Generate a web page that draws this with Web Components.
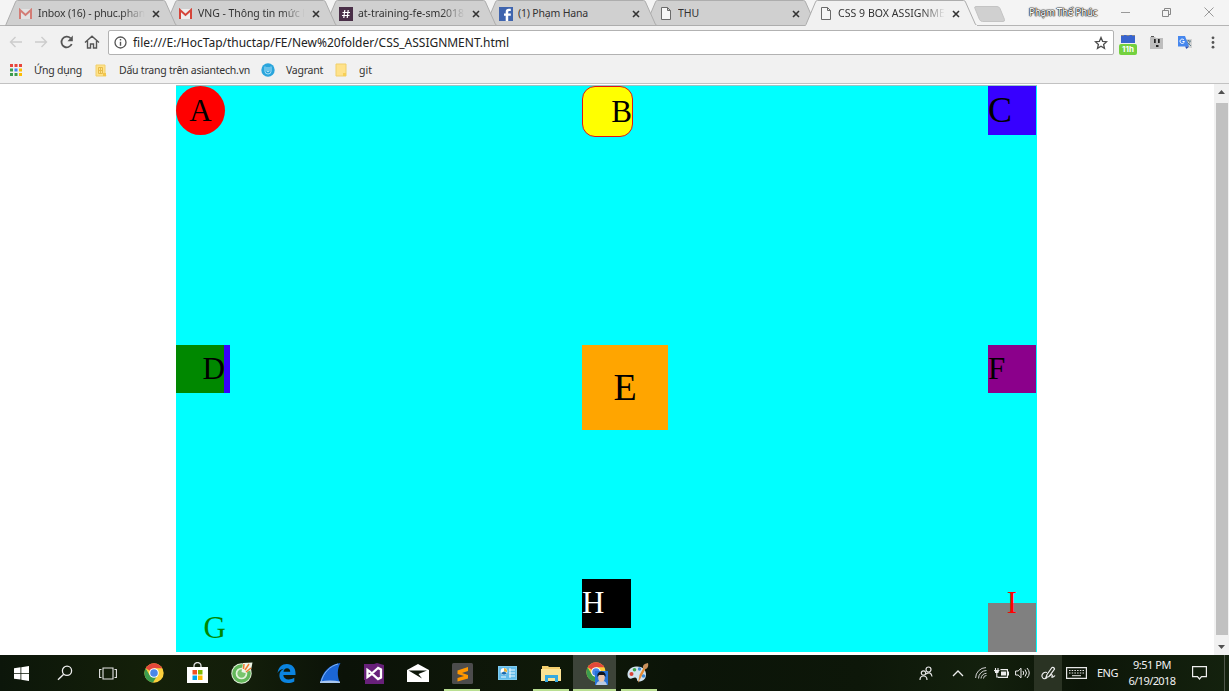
<!DOCTYPE html>
<html lang="vi"><head><meta charset="utf-8"><title>CSS 9 BOX ASSIGNMENT</title>
<style>html,body{margin:0;height:100%;overflow:hidden}</style></head>
<body><desktop-screen></desktop-screen>
<script>
const define=(name,html,init)=>customElements.define(name,class extends HTMLElement{
  connectedCallback(){
    if(this.shadowRoot)return;
    const t=document.createElement('template');
    t.innerHTML=typeof html==='function'?html(this):html;
    this.attachShadow({mode:'open'}).append(t.content.cloneNode(true));
    if(init)init(this);
  }
});

/* A single line of text, tracked to a given width. */
define('fit-text',`<style>:host{display:block;white-space:pre;flex:none}span{display:inline-block}</style><span><slot></slot></span>`,el=>{
  const s=el.shadowRoot.querySelector('span'),w=+el.getAttribute('w');
  const n=[...el.textContent.trim()].length;
  el.style.width=w+'px';
  s.style.letterSpacing=((w-s.getBoundingClientRect().width)/n).toFixed(3)+'px';
});

const page='<path d="M1.5.5h6l3 3v9h-9z M7.5.5v3h3" fill="#f6f6f6" stroke="#6b6b6b"/>';
const gmail='<path d="M0 1h13v10H0z" fill="#eee"/><path d="M1 11V2l5.500 5L12 2v9" fill="none" stroke="#d5453a" stroke-width="2"/>';
const folder='<path d="M1 1h10v12H1z" fill="#ffe28a" stroke="#f0cf6a"/><path d="M8 10h3v3H8z" fill="#f7cf55"/>';
const chrome='<circle cx="10" cy="10" r="9.700" fill="#fbcf3c"/><path d="M10 10L1.600 5.200A9.700 9.700 0 0 1 18.400 5.200H10z" fill="#e2483b"/><path d="M1.600 5.200A9.700 9.700 0 0 0 9 19.600L13.500 12 10 10 5.800 12.400z" fill="#3c9c4e"/><circle cx="10" cy="10" r="4.800" fill="#fff"/><circle cx="10" cy="10" r="3.800" fill="#4a86e8"/>';
const icons={
 gmail:[13,12,gmail],gmaildim:[13,12,'<g opacity=".6">'+gmail+'</g>'],page:[12,13,page],folder:[12,14,folder],
 slack:[14,14,'<rect width="14" height="14" fill="#4a2f48"/><path d="M5.800 3L4.800 11M9.200 3L8.200 11M3.500 5.500h7.500M3 8.500h7.500" stroke="#fff" stroke-width="1.200"/>'],
 fb:[14,14,'<rect width="14" height="14" fill="#3f64ae"/><path d="M9.200 14V8.800h2.600V6.600H9.200V5.200c0-.9.400-1.300 1.300-1.300h1.300V1.800h-2C7.700 1.800 6.700 3 6.700 5v1.600H5v2.200h1.700V14z" fill="#fff"/>'],
 close:[8,8,'<path d="M1 1l6 6M7 1l-6 6" stroke="#333" stroke-width="1.600"/>'],
 back:[14,12,'<path d="M13 6H1.500M6.500 1l-5 5 5 5" fill="none" stroke="#ccc" stroke-width="1.400"/>'],
 fwd:[14,12,'<path d="M0 6h11.500M6.500 1l5 5-5 5" fill="none" stroke="#ccc" stroke-width="1.400"/>'],
 reload:[14,14,'<path d="M11.700 9A5.300 5.300 0 1 1 10.500 3.200" fill="none" stroke="#555" stroke-width="1.800"/><path d="M12.800.5v5.700H7.500z" fill="#555"/>'],
 home:[16,14,'<path d="M1 7.500L8 1.200l7 6.300M3.500 6v7h3V9h3v4h3V6" fill="none" stroke="#555" stroke-width="1.400"/>'],
 info:[13,13,'<circle cx="6.500" cy="6.500" r="5.500" fill="none" stroke="#555" stroke-width="1.300"/><path d="M6.500 5.800v4M6.500 3v1.400" stroke="#555" stroke-width="1.400"/>'],
 star:[14,14,'<path d="M7 1.500l1.600 3.800 4 .4-3 2.700.9 4L7 10.300l-3.500 2.100.9-4-3-2.700 4-.4z" fill="none" stroke="#4d4d4d" stroke-width="1.300"/>'],
 ext2:[13,13,'<path d="M0 1h5l1 1h7v11H0z" fill="#bdbdbd"/><path d="M1 0h3v1H1z" fill="#555"/><path d="M4 3h1.700v4H4zM8 3h1.700v4H8zM6 9h2.500v2H6z" fill="#222"/>'],
 trans:[15,15,'<path d="M6 4h8v9H9z" fill="#d4d4d4"/><path d="M8 6h5M10.500 5v1M12 6c0 2-2 4-4 5M9 7l4 4" stroke="#607d8b" fill="none"/><path d="M0 1h7l4 10.500H0z" fill="#4687ee"/><path d="M7 11.500h4L8.500 14z" fill="#2b50b5"/><path d="M6 5A2.200 2.200 0 1 0 6.400 6.500H4.500" fill="none" stroke="#fff"/>'],
 dots:[4,13,'<g fill="#555"><circle cx="2" cy="1.800" r="1.400"/><circle cx="2" cy="6.500" r="1.400"/><circle cx="2" cy="11.200" r="1.400"/></g>'],
 apps:[12,12,[0,1,2].map(r=>[0,1,2].map(c=>`<rect x="${c*4.500}" y="${r*4.500}" width="3" height="3" fill="${[['#e8453c','#e8453c','#e8453c'],['#3c9c4e','#4285f4','#fbbc05'],['#3c9c4e','#3c9c4e','#fbbc05']][r][c]}"/>`).join('')).join('')],
 book:[12,13,'<path d="M1 1h9v9l1 2H1z" fill="#ffe28a" stroke="#f0cf6a"/><path d="M3.500 3.500h4v6h-4zM3.500 6.500h4M5.500 4v5" fill="none" stroke="#e6bb4a"/><path d="M8 9h3v3H8z" fill="#f2c64c"/>'],
 vag:[14,14,'<circle cx="7" cy="7" r="6.700" fill="#2aa5dc"/><path d="M4 3.500v5q0 2.500 3 2.500t3-2.500v-5M6 4v4.500h2V4" fill="none" stroke="#a7e0f8" stroke-width="1"/>'],
 win:[15,15,'<path d="M0 2.200L6.500 1.300V7H0zM7.300 1.200L15 0v7H7.300zM0 7.800h6.500v5.700L0 12.700zM7.300 7.800H15V15l-7.700-1.200z" fill="#fff"/>'],
 search:[16,16,'<circle cx="10" cy="5.800" r="4.600" fill="none" stroke="#eee" stroke-width="1.300"/><path d="M6.700 9.200L1 14.800" stroke="#eee" stroke-width="1.400"/>'],
 task:[18,13,'<path d="M4 1h10v11H4zM2.500 2.500H.6v8h1.900M15.500 2.500h1.900v8h-1.900" fill="none" stroke="#e4e4e4" stroke-width="1.100"/>'],
 chrome:[20,20,chrome],
 store:[21,22,'<path d="M7 6V4a3.500 3.500 0 0 1 7 0v2" fill="none" stroke="#ddd" stroke-width="1.300"/><path d="M0 5h21v16H0z" fill="#fff"/><path d="M5.500 8h4.500v4.500H5.500z" fill="#f25022"/><path d="M11 8h4.500v4.500H11z" fill="#7fba00"/><path d="M5.500 13.500h4.500V18H5.500z" fill="#00a4ef"/><path d="M11 13.500h4.500V18H11z" fill="#ffb900"/>'],
 coc:[22,22,'<circle cx="10.500" cy="11.500" r="10.200" fill="#e4f3dd"/><circle cx="10.500" cy="11.500" r="9.300" fill="#63b75a"/><circle cx="10.500" cy="11.500" r="5" fill="#79c56d" stroke="#e4f3dd" stroke-width="1.700"/><path d="M10.500 10L12 1 21.500.5 20 8l-6 3z" fill="#eef7e8"/><path d="M12.500 7l.5-5M14 8l4-6M15 10l5-4" stroke="#ef7b32" stroke-width="1.500"/>'],
 edge:[19,19,'<path d="M.5 9C1.500 3 5 0 9.800 0 15.500 0 18.500 4 18.500 9v2H6.300c.2 3 2.400 4.400 5.400 4.400 2 0 3.800-.6 5.600-1.700v3.800c-2 1-4 1.500-6.600 1.500C5.500 19 2.400 16 2.400 11.500 2.400 8.400 4 6 6.800 4.700 4 5 2 6.500.5 9zM6.500 7.700h6.700c0-2-1-3.400-3.200-3.400-2 0-3.200 1.400-3.500 3.400z" fill="#0b84e0"/>'],
 shark:[21,20,'<path d="M0 20C2 9 10 1 20.500 0 17 6 17 13 20 20z" fill="#1b66d6"/><path d="M1 19.500C3 10 10 3 18 1" fill="none" stroke="#83b4f2"/><path d="M0 18.500q10-2 20 0V20H0z" fill="#a9c8ef"/>'],
 vs:[20,21,'<path d="M0 1h10L13 0l7 2v19H1V17H0z" fill="#68217a"/><path d="M14 5L5.500 12.500 3.500 14V7l2 1.500L14 16l3-1.500v-8z" fill="none" stroke="#fff" stroke-width="2.300"/>'],
 mail:[22,18,'<path d="M0 6L11 0l11 6v12H0z" fill="#fff"/><path d="M1.500 6.500H20L11.500 10l3.500 4.500z" fill="#0d1609"/>'],
 sub:[21,21,'<rect width="21" height="21" rx="1.500" fill="#4c4c4c"/><path d="M16 4v4l-6 2 6 2v3.500L5.500 18.500V15l6.500-2-6.500-2V7.500z" fill="#ff9800"/>'],
 card:[19,14,'<path d="M0 0h19v14H0z" fill="#7dccf0"/><path d="M1 1h17v12H1z" fill="#63bce9"/><circle cx="6" cy="5.500" r="3.400" fill="#fff"/><path d="M6 5.500V2a3.500 3.500 0 0 1 3 4z" fill="#e6b33c"/><path d="M6 5.500L9 7a3.500 3.500 0 0 1-6 0z" fill="#176bb0"/><path d="M11 4h6M11 7h6M11 10h6M3 11h5M12 2v10" stroke="#eaf8ff"/>'],
 expl:[20,17,'<path d="M1 1h6l1 1h11v14H1z" fill="#f4cf6e"/><path d="M0 4h20v12H0z" fill="#fde394"/><path d="M4 17v-7h13v7h-3v-4H7v4z" fill="#36a9e1"/>'],
 user:[22,23,chrome+'<path d="M9 9h13v14H9z" fill="#2773d9"/><path d="M10 23q1-4 4-4h3q3 0 4 4z" fill="#b9c9e3"/><ellipse cx="15.500" cy="15.500" rx="3.300" ry="4.300" fill="#eac3a8"/><path d="M11.500 15q-1-5 4-5.500 5 .5 4 5.500l-1.500-2h-5z" fill="#10151f"/>'],
 paint:[22,21,'<path d="M1 14C-1 9 3 4 9 3.500s10 3 10 8c0 6-5 7-7 7-3 0-1-4-4-4-2 0-5 3-7-.5z" fill="#cfe2ee"/><circle cx="4.500" cy="11" r="2" fill="#d94134"/><circle cx="7.500" cy="6.800" r="1.800" fill="#3fa64b"/><circle cx="12.500" cy="6" r="1.700" fill="#3d8bd8"/><circle cx="16.500" cy="13" r="1.800" fill="#3d8bd8"/><path d="M19 5L11 20l1.500-8L17 4z" fill="#e48b35"/><path d="M16 5q-1-4 5-5 1 4-2 6z" fill="#c7905c"/>'],
 people:[14,15,'<g fill="none" stroke="#e5e5e5" stroke-width="1.200"><circle cx="9.500" cy="3.500" r="2.500"/><circle cx="4.500" cy="7" r="2.200"/><path d="M1 14q0-4 3.500-4T8 14M7 8q5-3 6 2.500"/></g>'],
 up:[12,7,'<path d="M1 6l5-5 5 5" fill="none" stroke="#eee" stroke-width="1.300"/>'],
 wifi:[12,12,'<g fill="none" stroke="#d2d2d2"><path d="M.6 11A10.500 10.500 0 0 1 11 .6M3.500 11.500A8 8 0 0 1 11.500 3.500M6 11.500A5.500 5.500 0 0 1 11.500 6.300M8.500 11.500a3 3 0 0 1 3-3"/></g>'],
 bat:[15,11,'<path d="M6.500 1.600h6.900v7.800H4M13.500 4h1v3h-1" fill="none" stroke="#eee" stroke-width="1.200"/><path d="M7 3.500h5v4H7z" fill="#eee"/><path d="M1.500 0v2M4 0v2M0 2.500h5.500M.8 3.500h4M1 4.500h3.500M2.800 4v5h1.500" fill="none" stroke="#eee" stroke-width="1.100"/>'],
 vol:[15,12,'<g fill="none" stroke="#eee"><path d="M.6 4h2.500L6 1.200v9.600L3.100 8H.6z"/><path d="M8 4q1.500 2 0 4M10 2.500q3 3.500 0 7M12 1q4.500 5 0 10"/></g>'],
 pen:[15,15,'<g fill="none" stroke="#eee" stroke-width="1.200"><path d="M5 11.500L6 8.500 11 1.500q2-.5 2.500 1.500L8 10.500z"/><path d="M6 6.500C3 5.500 .5 8 1 10.500s3 3 5 1M8.500 10c2-2.500 3.500-1 2.500.500s2 .5 3-1"/></g>'],
 key:[21,12,'<path d="M.6.6h19.800v10.800H.6z" fill="none" stroke="#e6e6e6" stroke-width="1.200"/><path d="M3 3.500h15M3 6h15" stroke="#e6e6e6" stroke-dasharray="1.500 1.200"/><path d="M6 8.700h9" stroke="#e6e6e6"/>'],
 note:[15,14,'<path d="M.6.6h13.800v10H9.500L7.500 13l-2-2.400H.6z" fill="none" stroke="#eee" stroke-width="1.200"/>'],
 min:[9,9,'<path d="M0 4.500h9" stroke="#999"/>'],
 max:[10,9,'<path d="M.5 2.500h6v6h-6zM2.500 2.500v-2h6v6h-2" fill="none" stroke="#888"/>'],
 x:[10,10,'<path d="M.5.5l9 9M9.500.5l-9 9" stroke="#999"/>']
};
define('ui-icon',el=>{const[w,h,d]=icons[el.getAttribute('name')];
 return `<style>:host{display:block;flex:none;width:${w}px;height:${h}px}svg{display:block}</style><svg width="${w}" height="${h}" viewBox="0 0 ${w} ${h}">${d}</svg>`});

define('browser-tab',el=>{const a=el.hasAttribute('active');return `<style>
:host{display:flex;position:relative;width:173px;height:26px;margin-right:-13px;box-sizing:border-box;padding:1px 0 0 14px;align-items:center;flex:none;color:#333;z-index:${a?10:el.getAttribute('z')}}
.bg{position:absolute;left:0;top:0;z-index:-1}
.icon{width:19px}.icon ui-icon{margin-left:${/gmail|fb|slack/.test(el.getAttribute('icon'))?-.5:.5}px}.label{width:107px;margin-top:-1px;overflow:hidden;-webkit-mask:linear-gradient(90deg,#000 78%,transparent)}
.plain{-webkit-mask:none}ui-icon[name=close]{margin-left:7px}</style>
<svg class="bg" width="173" height="26"><path d="M0 25.500L1 24.500L10.500 2Q11 .5 12.500 .5H158.500Q160 .5 160.500 2L170.500 24.500L172 25.500" fill="${a?'#f1f1f1':'#d0d0d0'}" stroke="#adadad"/>${a?'<path d="M1 25h171v1H1z" fill="#f1f1f1"/>':'<path d="M0 25.500h173" stroke="#adadad"/>'}</svg>
<div class="icon"><ui-icon name="${el.getAttribute('icon')}"></ui-icon></div><div class="label ${el.hasAttribute('short')?'plain':''}"><slot></slot></div><ui-icon name="close"></ui-icon>`});

define('tab-strip',`<style>
:host{display:flex;height:26px;background:#f4f4f4;box-shadow:inset 0 -1px #b5b5b5;padding-left:5px;box-sizing:border-box;font-size:10.500px;isolation:isolate}
.new{width:32px;height:16px;margin:6px 0 0 9px;flex:none}
.user{margin:5px 0 0 23px;font-size:10px;line-height:15px;color:#fff;text-shadow:0 0 1px #222,0 0 1px #222,0 0 1px #333,0 0 1px #333,0 0 2px #555}
.ctl{display:flex;align-items:center;height:24px;margin-left:24px;gap:32px}
</style>
<browser-tab icon="gmaildim" z="6"><fit-text w="107">Inbox (16) - phuc.phan</fit-text></browser-tab>
<browser-tab icon="gmail" z="5"><fit-text w="107">VNG - Thông tin mức l</fit-text></browser-tab>
<browser-tab icon="slack" z="4"><fit-text w="106">at-training-fe-sm2018</fit-text></browser-tab>
<browser-tab icon="fb" z="3" short><fit-text w="70">(1) Phạm Hana</fit-text></browser-tab>
<browser-tab icon="page" z="2" short><fit-text w="21">THU</fit-text></browser-tab>
<browser-tab icon="page" active><fit-text w="107">CSS 9 BOX ASSIGNME</fit-text></browser-tab>
<svg class="new" viewBox="0 0 32 16"><path d="M2 .5h21q2 0 3 2l4.500 11q.5 2-1.500 2H8.500q-2 0-3-2L1 2.500Q0 .5 2 .5z" fill="#d0d0d0" stroke="#c4c4c4"/></svg>
<fit-text class="user" w="68">Phạm Thế Phúc</fit-text>
<div class="ctl"><ui-icon name="min"></ui-icon><ui-icon name="max"></ui-icon><ui-icon name="x"></ui-icon></div>`);

define('browser-toolbar',`<style>
:host{display:flex;height:32px;align-items:center;background:#f1f1f1;padding:1px 0 0 9px;box-sizing:border-box}
.nav{display:flex;align-items:center;width:99px;gap:12px;flex:none;margin-top:-1px}
.box{display:flex;align-items:center;box-sizing:border-box;width:1006px;height:25px;border:1px solid #b2b2b2;border-radius:2px;background:#fff;padding:0 5px;flex:none;font-size:12px;color:#222}
.box fit-text{margin-left:6px}.box ui-icon:last-child{margin-left:auto}
.ext{display:flex;align-items:center;margin-left:5px;width:110px}
.cal{width:18px;height:20px;margin-top:3px}
.cal i{display:block;width:14px;height:7px;margin:1px 2px 1px;background:#3864cf;border-top:1px dashed #888}
.cal b{display:block;width:18px;height:11px;border-radius:2px;background:#73d13f;color:#fff;font:bold 8px/11px Inter,sans-serif;text-align:center}
</style><div class="nav"><ui-icon name="back"></ui-icon><ui-icon name="fwd"></ui-icon><ui-icon name="reload" style="margin-left:-1px"></ui-icon><ui-icon name="home" style="margin-left:-2px"></ui-icon></div>
<div class="box"><ui-icon name="info"></ui-icon><fit-text w="376">file:///E:/HocTap/thuctap/FE/New%20folder/CSS_ASSIGNMENT.html</fit-text><ui-icon name="star"></ui-icon></div>
<div class="ext"><div class="cal"><i></i><b>11h</b></div><ui-icon name="ext2" style="margin-left:13px"></ui-icon><ui-icon name="trans" style="margin-left:15px"></ui-icon><ui-icon name="dots" style="margin-left:18px"></ui-icon></div>`);

define('bookmarks-bar',`<style>
:host{display:flex;height:26px;align-items:center;background:#f1f1f1;border-bottom:1px solid #c2c2c2;box-sizing:border-box;padding:0 0 1px 10px;font-size:10.500px;color:#333}
ui-icon{margin-right:12px}fit-text{margin:-1px 13px 0 0}</style>
<ui-icon name="apps"></ui-icon><fit-text w="48">Ứng dụng</fit-text>
<ui-icon name="book"></ui-icon><fit-text w="131" style="margin-right:11px">Dấu trang trên asiantech.vn</fit-text>
<ui-icon name="vag" style="margin-right:11px"></ui-icon><fit-text w="37" style="margin-right:12px">Vagrant</fit-text>
<ui-icon name="folder"></ui-icon><fit-text w="13">git</fit-text>`);

define('letter-box',`<style>:host{display:block;box-sizing:border-box;width:49px;height:49px;font:31px/49px "Liberation Serif",serif;color:#000}</style><slot></slot>`);

define('nine-box',`<style>
:host{display:grid;grid-template:259px 234px 73px / 406px 406px 49px;width:861px;height:566px;background:#0ff;box-shadow:0 -1px #9bc4c4;flex:none}
.a{background:red;border-radius:50%;text-align:center}
.b{background:#ff0;border:1px solid #e01515;border-radius:13px;width:51px;height:51px;text-align:right}
.c{background:#3700ff;font-size:36px;width:48px}
.d{background:linear-gradient(90deg,#080 48px,#3700ff 48px);padding-right:5px;width:54px;text-align:right;height:48px;line-height:47px}
.e{background:#ffa500;width:86px;height:85px;text-align:center;font-size:38px;line-height:84px}
.f{background:#8b008b;width:48px;height:48px;line-height:47px}
.g{color:#080;text-align:right;margin-top:25px;height:48px;line-height:48px;width:50px}
.h{background:#000;color:#fff;line-height:47px}
.i{background:gray;color:red;text-align:center;margin-top:24px;line-height:0;width:48px}
</style><letter-box class="a">A</letter-box><letter-box class="b">B</letter-box><letter-box class="c">C</letter-box>
<letter-box class="d">D</letter-box><letter-box class="e">E</letter-box><letter-box class="f">F</letter-box>
<letter-box class="g">G</letter-box><letter-box class="h">H</letter-box><letter-box class="i">I</letter-box>`);

define('page-view',`<style>
:host{display:flex;height:571px;background:#fff;justify-content:space-between}
nine-box{margin:2px 0 0 176px}
.bar{width:15px;background:#f1f1f1;display:flex;flex-direction:column;align-items:center;box-sizing:border-box;padding:6px 0 5px}
.thumb{width:12px;height:532px;background:#c1c1c1;margin:9px 0 10px}
svg{display:block;flex:none}</style><nine-box></nine-box>
<div class="bar"><svg width="7" height="4"><path d="M0 4L3.500 0 7 4z" fill="#505050"/></svg><div class="thumb"></div><svg width="7" height="4"><path d="M0 0h7L3.500 4z" fill="#505050"/></svg></div>`);

define('task-item',el=>`<style>:host{display:flex;width:44px;height:36px;align-items:center;justify-content:center;box-sizing:border-box;position:relative;flex:none}
:host([active]){background:#3d4439}
:host([open])::after{content:"";position:absolute;left:4px;right:4px;bottom:0;height:2px;background:#b9df92}
:host([active])::after{left:0;right:0}</style><ui-icon name="${el.getAttribute('icon')}"></ui-icon>`);

define('task-bar',`<style>
:host{display:flex;height:36px;background:linear-gradient(90deg,#0c160a,#142009 12%,#131e0a 20%,#0b1208 28%,#0f1909 45%,#0b1408 55%,#0d1709 70%,#13200d 80%,#0c1508 88%,#14220e);color:#f2f2f2;font-size:11px}
.apps{display:flex}.tray{display:flex;align-items:center;margin-left:auto}
.ink{background:#2a3323;width:28px;height:36px;display:flex;align-items:center;justify-content:center}
.clock{display:flex;flex-direction:column;align-items:center;line-height:16px;width:48px;margin:-1px 0 0 10px}
.edge{width:1px;height:36px;background:#4f574b;margin-left:17px;margin-right:4px}
</style><div class="apps">
<task-item icon="win" style="width:43px"></task-item><task-item icon="search"></task-item><task-item icon="task" style="width:42px"></task-item><task-item icon="chrome" style="width:50px"></task-item><task-item icon="store" style="width:37px"></task-item><task-item icon="coc" style="width:52px"></task-item><task-item icon="edge" style="width:37px"></task-item><task-item icon="shark" style="width:51px"></task-item><task-item icon="vs" style="width:36px"></task-item><task-item icon="mail" style="width:52px"></task-item>
<task-item icon="sub" open style="margin-left:-4px"></task-item><task-item icon="card" style="margin-left:1px"></task-item><task-item icon="expl" open></task-item><task-item icon="user" active open style="width:43px;padding-left:4px"></task-item><task-item icon="paint" open style="margin-left:1px;padding-right:2px"></task-item></div>
<div class="tray"><ui-icon name="people"></ui-icon><ui-icon name="up" style="margin-left:19px"></ui-icon><ui-icon name="wifi" style="margin-left:11px"></ui-icon><ui-icon name="bat" style="margin-left:7px"></ui-icon><ui-icon name="vol" style="margin-left:6px"></ui-icon><div class="ink" style="margin-left:4px"><ui-icon name="pen"></ui-icon></div><ui-icon name="key" style="margin-left:4px"></ui-icon><fit-text w="21" style="margin:-2px 0 0 10px">ENG</fit-text>
<div class="clock"><fit-text w="38">9:51 PM</fit-text><fit-text w="47">6/19/2018</fit-text></div><ui-icon name="note" style="margin-left:16px"></ui-icon><div class="edge"></div></div>`);

define('desktop-screen',`<style>:host{display:flex;flex-direction:column;width:1229px;height:691px;overflow:hidden;font-family:"Noto Sans","Open Sans",sans-serif}</style>
<tab-strip></tab-strip><browser-toolbar></browser-toolbar><bookmarks-bar></bookmarks-bar><page-view></page-view><task-bar></task-bar>`);
</script></body></html>
